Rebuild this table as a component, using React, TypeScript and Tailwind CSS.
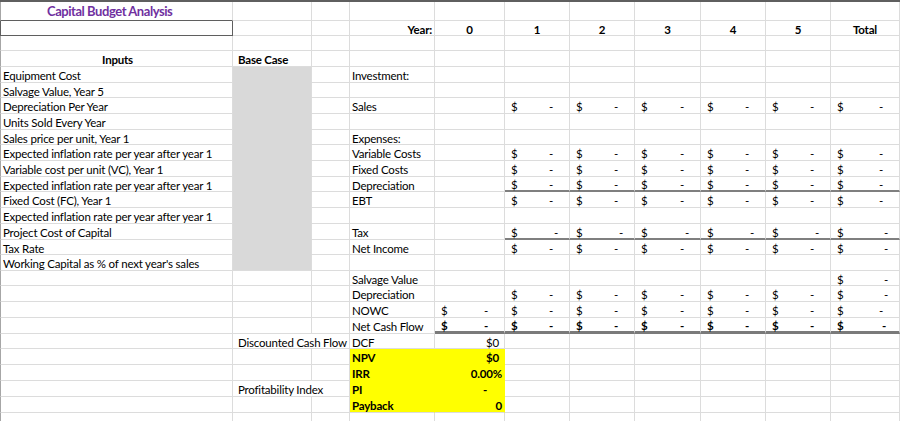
import type { ReactNode } from 'react';
import { twMerge } from 'tailwind-merge';

type Col = 'A' | 'B' | 'BC' | 'C' | 'D' | 'E' | 'F' | 'G' | 'H' | 'I' | 'J' | 'K';
type Spec = { c?: ReactNode; cls?: string };
type RowDef = { h: string } & Partial<Record<Col, Spec>>;

const WIDTH: Record<Col, string> = {
  A: 'w-[233px] border-l border-l-[#a6a6a6] pl-[2px]',
  B: 'w-[79px]',
  BC: 'w-[117px]',
  C: 'w-[38px]',
  D: 'w-[85px] pl-[2px]',
  E: 'w-[70px]',
  F: 'w-[65px]',
  G: 'w-[65px]',
  H: 'w-[66px]',
  I: 'w-[65px]',
  J: 'w-[65px]',
  K: 'w-[69px]',
};

const YEARS: Col[] = ['F', 'G', 'H', 'I', 'J'];

const RULE = 'border-b-2 border-b-[#7f7f7f]';
const THICK = 'border-b-[3px] border-b-[#7a7a7a]';
const GRAY = { cls: 'bg-[#d9d9d9] border-b-[#d9d9d9]' };
const GRAY_END = { cls: 'bg-[#d9d9d9]' };
const YEL = 'bg-[#ffff00] border-r-[#ffff00] border-b-[#ffff00] font-bold';

function acct(opts: { wide?: boolean; bold?: boolean; rule?: string; pr?: string } = {}): Spec {
  return {
    c: (
      <>
        <span>$</span>
        <span>-</span>
      </>
    ),
    cls: twMerge(
      'justify-between pl-[6px]',
      opts.wide ? 'pr-[11px]' : 'pr-[16px]',
      opts.pr,
      opts.bold && 'font-bold',
      opts.rule,
    ),
  };
}

function years(opts: { wide?: boolean; bold?: boolean; rule?: string; kWide?: boolean } = {}) {
  const row: Partial<Record<Col, Spec>> = {};
  YEARS.forEach((c) => (row[c] = acct(opts)));
  row.K = acct({ ...opts, wide: opts.wide || opts.kWide });
  return row;
}

const label = (c: string) => ({ c });
const head = (c: string) => ({ c, cls: 'justify-center font-bold' });

const ROWS: RowDef[] = [
  {
    h: 'h-[19px]',
    A: {
      c: 'Capital Budget Analysis',
      cls: 'pl-[46px] pt-[1px] text-[13px] tracking-[-0.45px] font-bold text-[#7030a0] border-b-[#5f5f5f]',
    },
  },
  {
    h: 'h-[15px]',
    A: { cls: 'border-l-[#5f5f5f] border-r-[#5f5f5f] border-b-[#5f5f5f]' },
    D: { c: 'Year:', cls: 'justify-end pr-[2px] font-bold' },
    E: head('0'),
    F: head('1'),
    G: head('2'),
    H: head('3'),
    I: head('4'),
    J: head('5'),
    K: head('Total'),
  },
  { h: 'h-[15px]' },
  {
    h: 'h-[16px]',
    A: { c: 'Inputs', cls: 'justify-center font-bold' },
    B: { c: 'Base Case', cls: 'pl-[5px] font-bold' },
  },
  { h: 'h-[16px]', A: label('Equipment Cost'), B: GRAY, D: label('Investment:') },
  { h: 'h-[15px]', A: label('Salvage Value, Year 5'), B: GRAY },
  { h: 'h-[16px]', A: label('Depreciation Per Year'), B: GRAY, D: label('Sales'), ...years() },
  { h: 'h-[16px]', A: label('Units Sold Every Year'), B: GRAY },
  { h: 'h-[15px]', A: label('Sales price per unit, Year 1'), B: GRAY, D: label('Expenses:') },
  {
    h: 'h-[16px]',
    A: label('Expected inflation rate per year after year 1'),
    B: GRAY,
    D: label('Variable Costs'),
    ...years(),
  },
  {
    h: 'h-[16px]',
    A: label('Variable cost per unit (VC), Year 1'),
    B: GRAY,
    D: label('Fixed Costs'),
    ...years(),
  },
  {
    h: 'h-[15px]',
    A: label('Expected inflation rate per year after year 1'),
    B: GRAY,
    D: label('Depreciation'),
    ...years({ rule: RULE }),
  },
  { h: 'h-[16px]', A: label('Fixed Cost (FC), Year 1'), B: GRAY, D: label('EBT'), ...years() },
  { h: 'h-[16px]', A: label('Expected inflation rate per year after year 1'), B: GRAY },
  {
    h: 'h-[16px]',
    A: label('Project Cost of Capital'),
    B: GRAY,
    D: label('Tax'),
    ...years({ wide: true, rule: RULE }),
  },
  { h: 'h-[15px]', A: label('Tax Rate'), B: GRAY, D: label('Net Income'), ...years({ kWide: true }) },
  { h: 'h-[16px]', A: label("Working Capital as % of next year's sales"), B: GRAY_END },
  { h: 'h-[15px]', D: label('Salvage Value'), K: acct({ wide: true }) },
  { h: 'h-[16px]', D: label('Depreciation'), ...years({ kWide: true }) },
  { h: 'h-[16px]', D: label('NOWC'), E: acct(), ...years() },
  {
    h: 'h-[16px]',
    D: label('Net Cash Flow'),
    E: acct({ bold: true, rule: THICK }),
    ...years({ bold: true, rule: THICK }),
    K: acct({ bold: true, rule: THICK, pr: 'pr-[13px]' }),
  },
  {
    h: 'h-[15px]',
    BC: { c: 'Discounted Cash Flow', cls: 'pl-[5px]' },
    D: label('DCF'),
    E: { c: '$0', cls: 'justify-end pr-[5px]' },
  },
  {
    h: 'h-[16px]',
    D: { c: 'NPV', cls: YEL },
    E: { c: '$0', cls: `${YEL} justify-end pr-[5px]` },
  },
  {
    h: 'h-[16px]',
    D: { c: 'IRR', cls: YEL },
    E: { c: '0.00%', cls: `${YEL} justify-end pr-[2px]` },
  },
  {
    h: 'h-[16px]',
    BC: { c: 'Profitability Index', cls: 'pl-[5px]' },
    D: { c: 'PI', cls: YEL },
    E: { c: '-', cls: `${YEL} justify-end pr-[17px]` },
  },
  {
    h: 'h-[16px]',
    D: { c: 'Payback', cls: `${YEL} border-b-[#dcdcdc]` },
    E: { c: '0', cls: `${YEL} justify-end pr-[2px] border-b-[#dcdcdc]` },
  },
  { h: 'h-[16px]' },
];

function Cell({ col, spec }: { col: Col; spec?: Spec }) {
  return (
    <div
      className={twMerge(
        'flex h-full shrink-0 items-center overflow-visible whitespace-nowrap border-r border-b border-r-[#dcdcdc] border-b-[#dcdcdc] pt-[3px] leading-none',
        WIDTH[col],
        spec?.cls,
      )}
    >
      {spec?.c}
    </div>
  );
}

function Row({ row }: { row: RowDef }) {
  const cols: Col[] = row.BC
    ? ['A', 'BC', 'D', 'E', 'F', 'G', 'H', 'I', 'J', 'K']
    : ['A', 'B', 'C', 'D', 'E', 'F', 'G', 'H', 'I', 'J', 'K'];
  return (
    <div className={twMerge('flex', row.h)}>
      {cols.map((c) => (
        <Cell key={c} col={c} spec={row[c]} />
      ))}
    </div>
  );
}

export default function App() {
  return (
    <div className="h-[421px] w-[900px] overflow-hidden border-t-2 border-t-[#5f5f5f] bg-white font-[family-name:Lato,'Liberation_Sans',sans-serif] text-[11.5px] tracking-[-0.2px] text-black">
      {ROWS.map((r, i) => (
        <Row key={i} row={r} />
      ))}
    </div>
  );
}
